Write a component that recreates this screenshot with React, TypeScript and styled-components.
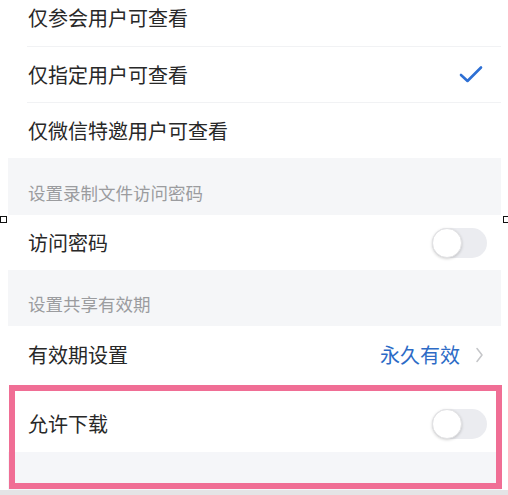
import styled, { createGlobalStyle } from 'styled-components'

const GlobalStyle = createGlobalStyle`
  html, body {
    margin: 0;
    padding: 0;
    background: #ffffff;
  }
  body {
    font-family: "Noto Sans CJK SC", "Noto Sans", sans-serif;
  }
`

const Page = styled.div`
  position: relative;
  width: 508px;
  height: 495px;
  overflow: hidden;
  background: #ffffff;
`

const Panel = styled.div`
  display: flex;
  flex-direction: column;
  margin: 0 7px 0 8px;
  background: #ffffff;
  box-shadow: inset 1px 0 0 #f4f5f7;
`

const Row = styled.div<{ $h: number; $top?: number; $bottom?: number; $right?: number; $divider?: boolean }>`
  position: relative;
  display: flex;
  align-items: center;
  justify-content: space-between;
  box-sizing: border-box;
  height: ${(p) => p.$h}px;
  padding: ${(p) => p.$top ?? 0}px ${(p) => p.$right ?? 14}px ${(p) => p.$bottom ?? 0}px 20px;
  background: #ffffff;

  ${(p) =>
    p.$divider &&
    `
    &::after {
      content: '';
      position: absolute;
      left: 19px;
      right: 0;
      bottom: 0;
      height: 1px;
      background: #f1f2f4;
    }
  `}
`

const Label = styled.span`
  font-size: 20px;
  line-height: 28px;
  color: #282828;
`

const SectionHeader = styled.div<{ $h: number }>`
  display: flex;
  align-items: flex-end;
  box-sizing: border-box;
  height: ${(p) => p.$h}px;
  padding: 0 20px 10px;
  background: #f5f6f8;
  font-size: 17.5px;
  line-height: 24px;
  color: #9b9c9f;
`

const Filler = styled.div<{ $h: number }>`
  height: ${(p) => p.$h}px;
  background: #f5f6f9;
`

const Value = styled.div`
  display: flex;
  align-items: center;
  gap: 16px;
  font-size: 20px;
  line-height: 28px;
  color: #2d6bc6;
`

const Switch = styled.div`
  position: relative;
  width: 55px;
  height: 30px;
  border-radius: 15px;
  background: #ebecf0;
  flex-shrink: 0;
`

const Knob = styled.div`
  position: absolute;
  left: 0;
  top: 0;
  width: 30px;
  height: 30px;
  box-sizing: border-box;
  border-radius: 50%;
  background: #ffffff;
  border: 1px solid #e2e2e4;
  box-shadow: 0 1px 3px rgba(0, 0, 0, 0.18);
`

const BottomStrip = styled.div`
  height: 5px;
  background: #e4e4e6;
`

const Frame = styled.div`
  position: absolute;
  left: 9px;
  top: 385px;
  width: 493px;
  height: 104px;
  box-sizing: border-box;
  border: 6px solid #f06e95;
  pointer-events: none;
`

const Handle = styled.div<{ $x: number }>`
  position: absolute;
  left: ${(p) => p.$x}px;
  top: 216px;
  width: 7px;
  height: 7px;
  box-sizing: border-box;
  border: 1px solid #111111;
  background: #ffffff;
`

function Toggle() {
  return (
    <Switch>
      <Knob />
    </Switch>
  )
}

function Check() {
  return (
    <svg width="26" height="20" viewBox="0 0 26 20" fill="none">
      <path d="M2 10 L8.5 16 L22 2.5" stroke="#2d6fd4" strokeWidth="2.6" strokeLinecap="round" strokeLinejoin="round" />
    </svg>
  )
}

function Chevron() {
  return (
    <svg width="7" height="16" viewBox="0 0 7 16" fill="none">
      <path d="M1 1.5 L6 8 L1 14.5" stroke="#c5c6c9" strokeWidth="1.5" strokeLinecap="round" strokeLinejoin="round" />
    </svg>
  )
}

export default function App() {
  return (
    <>
      <GlobalStyle />
      <Page>
        <Panel>
          <Row $h={47} $bottom={11} $divider>
            <Label>仅参会用户可查看</Label>
          </Row>
          <Row $h={56} $right={16} $divider>
            <Label>仅指定用户可查看</Label>
            <Check />
          </Row>
          <Row $h={55}>
            <Label>仅微信特邀用户可查看</Label>
          </Row>
          <SectionHeader $h={57}>设置录制文件访问密码</SectionHeader>
          <Row $h={55}>
            <Label>访问密码</Label>
            <Toggle />
          </Row>
          <SectionHeader $h={56}>设置共享有效期</SectionHeader>
          <Row $h={58} $right={18}>
            <Label>有效期设置</Label>
            <Value>
              永久有效
              <Chevron />
            </Value>
          </Row>
          <Row $h={68} $top={12}>
            <Label>允许下载</Label>
            <Toggle />
          </Row>
          <Filler $h={38} />
        </Panel>
        <BottomStrip />
        <Frame />
        <Handle $x={0} />
        <Handle $x={503} />
      </Page>
    </>
  )
}
